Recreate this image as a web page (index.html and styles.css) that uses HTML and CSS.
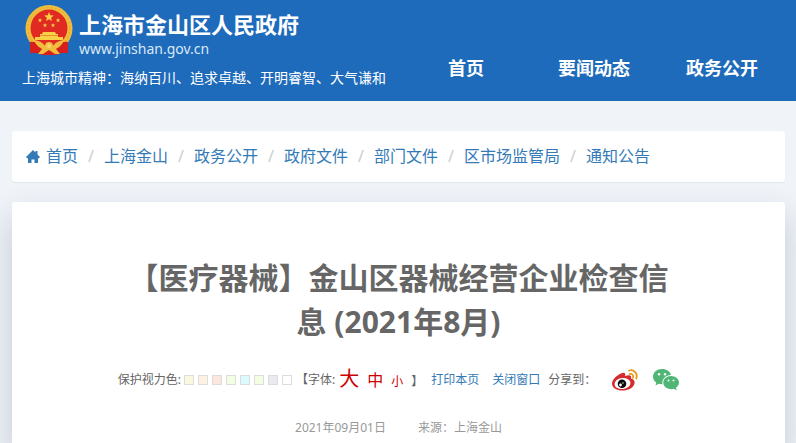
FILE: index.html
```html
<!DOCTYPE html>
<html lang="zh-CN">
<head>
    <meta charset="UTF-8">
    <meta name="viewport" content="width=device-width, initial-scale=1.0">
    <title>【医疗器械】金山区器械经营企业检查信息 (2021年8月)</title>
    <link rel="stylesheet" href="styles.css">
</head>
<body>
    <header class="header">
        <div class="brand">
            <a class="logo" href="#">
                <svg class="emblem" viewBox="0 0 48 52" aria-hidden="true">
                    <path d="M7 36 L5 48 L12 48 L18 50 H30 L36 48 L43 48 L41 36 Z" fill="#d81f1c"/>
                    <circle cx="24" cy="23.500" r="23.500" fill="#f0bd3c"/>
                    <circle cx="24" cy="23.500" r="21" fill="none" stroke="#e0a42f" stroke-width="1" stroke-dasharray="2 2"/>
                    <circle cx="24" cy="23" r="18.500" fill="#e12a22"/>
                    <path d="M24 7 L25.300 10.300 L28.800 10.500 L26.100 12.700 L27 16.100 L24 14.200 L21 16.100 L21.900 12.700 L19.200 10.500 L22.700 10.300 Z" fill="#f8cf45"/>
                    <g fill="#f8cf45">
                        <path id="star" d="M15 13 L15.600 14.500 L17.200 14.600 L16 15.600 L16.400 17.200 L15 16.300 L13.600 17.200 L14 15.600 L12.800 14.600 L14.400 14.500 Z"/>
                        <use href="#star" x="18"/>
                        <use href="#star" x="5" y="5"/>
                        <use href="#star" x="13" y="5"/>
                    </g>
                    <path d="M18 27 H30 L31 29 H33 V32 H38 V35 H10 V32 H15 V29 H17 Z" fill="#f8cf45"/>
                    <path d="M15 30.500 H33" stroke="#e8902b"/>
                    <path d="M5 37 Q12 36 16 42 H32 Q36 36 43 37 V48 L36 47 L31 50 H17 L12 47 L5 48 Z" fill="#d81f1c"/>
                    <path d="M9 35 Q17 36 20 41 L24 37 L28 41 Q31 36 39 35 Q37 41 31 44 L35 49 H30 L24 45 L18 49 H13 L17 44 Q11 41 9 35 Z" fill="#f0bd3c"/>
                    <circle cx="24" cy="41" r="4" fill="#f0bd3c"/>
                    <circle cx="24" cy="41" r="2" fill="#f8d96a"/>
                </svg>
                <span class="logo-text">
                    <strong class="site-name">上海市金山区人民政府</strong>
                    <span class="site-url">www.jinshan.gov.cn</span>
                </span>
            </a>
            <p class="motto">上海城市精神：海纳百川、追求卓越、开明睿智、大气谦和</p>
        </div>
        <nav class="nav">
            <a href="#">首页</a>
            <a href="#">要闻动态</a>
            <a href="#">政务公开</a>
        </nav>
    </header>

    <main class="container">
        <ol class="breadcrumb">
            <li>
                <a href="#">
                    <svg class="home" viewBox="0 0 14 14" aria-hidden="true"><path d="M7 0 L9.500 2.500 V1 H11.500 V4.500 L14 7 L13 8.200 H12 V13 H8.500 V9.500 H5.500 V13 H2 V8.200 H1 L0 7 Z" fill="#337ab7"/></svg>首页</a>
            </li>
            <li><a href="#">上海金山</a></li>
            <li><a href="#">政务公开</a></li>
            <li><a href="#">政府文件</a></li>
            <li><a href="#">部门文件</a></li>
            <li><a href="#">区市场监管局</a></li>
            <li><a href="#">通知公告</a></li>
        </ol>

        <article class="article">
            <h1>【医疗器械】金山区器械经营企业检查信息 (2021年8月)</h1>
            <div class="tools">
                <span>保护视力色:</span>
                <div class="swatches">
                    <button type="button" class="swatch yellow" aria-label="黄色"></button>
                    <button type="button" class="swatch orange" aria-label="橙色"></button>
                    <button type="button" class="swatch red" aria-label="红色"></button>
                    <button type="button" class="swatch green" aria-label="绿色"></button>
                    <button type="button" class="swatch blue" aria-label="蓝色"></button>
                    <button type="button" class="swatch green" aria-label="浅绿"></button>
                    <button type="button" class="swatch gray" aria-label="灰色"></button>
                    <button type="button" class="swatch white" aria-label="白色"></button>
                </div>
                <span>【字体:</span>
                <div class="sizes">
                    <a class="large" href="#">大</a>
                    <a class="medium" href="#">中</a>
                    <a class="small" href="#">小</a>
                    <span>】</span>
                </div>
                <div class="actions">
                    <a href="#">打印本页</a>
                    <a href="#">关闭窗口</a>
                </div>
                <span class="share-label">分享到：</span>
                <div class="share">
                    <a href="#" aria-label="微博">
                        <svg viewBox="0 0 26 22" aria-hidden="true">
                            <path d="M9 4.500 C12 3 14 4 13 7 C17 5.500 20 6 19 9.500 C22 10.500 23 12 22.500 14.500 C21.500 19 16 21.500 10.500 21.500 C5 21.500 0 19 0 14.500 C0 11 4.500 6.500 9 4.500 Z" fill="#d52b2e"/>
                            <ellipse cx="10.500" cy="14.500" rx="8" ry="5.500" fill="#fff" transform="rotate(-7 10.500 14.500)"/>
                            <circle cx="10" cy="14.800" r="4.300" fill="#0a0a0a"/>
                            <circle cx="8.500" cy="16" r="1.400" fill="#fff"/>
                            <circle cx="11" cy="14" r="0.700" fill="#fff"/>
                            <path d="M17 1.500 C22 0 26 4.500 24.300 9.500 M17.500 5 C20 4.300 21.800 6.500 21 8.800" fill="none" stroke="#e89b1c" stroke-width="1.800" stroke-linecap="round"/>
                        </svg>
                    </a>
                    <a href="#" aria-label="微信">
                        <svg viewBox="0 0 26 22" aria-hidden="true">
                            <path d="M9 0 C4 0 0 3.400 0 7.700 C0 10.200 1.300 12.200 3.300 13.600 L2.500 16.500 L5.700 14.800 C7 15.200 8 15.300 9.500 15.200 C8.500 10 13 6 18 6 C17.300 2.500 13.500 0 9 0 Z" fill="#50b674"/>
                            <path d="M18 7 C13.500 7 10.300 10 10.300 13.600 C10.300 17.500 13.800 20.200 18 20.200 C19 20.200 20 20 21 19.700 L23.700 21.500 L23 18.700 C24.800 17.400 26 15.700 26 13.600 C26 10 22.500 7 18 7 Z" fill="#50b674"/>
                            <g fill="#fff">
                                <circle cx="6" cy="5.200" r="1.200"/>
                                <circle cx="12" cy="5.200" r="1.200"/>
                                <circle cx="15.500" cy="11.500" r="1"/>
                                <circle cx="20.500" cy="11.500" r="1"/>
                            </g>
                        </svg>
                    </a>
                </div>
            </div>
            <p class="meta">
                <span>2021年09月01日</span>
                <span>来源：上海金山</span>
            </p>
        </article>
    </main>
</body>
</html>
```

FILE: styles.css
```css
* {
    box-sizing: border-box;
}
body {
    margin: 0;
    min-height: 100vh;
    display: flex;
    flex-direction: column;
    font-family: "Noto Sans", "Noto Sans CJK SC", sans-serif;
    font-size: 12px;
    color: #666;
    background-color: #f0f3f8;
}
a {
    color: #337ab7;
    text-decoration: none;
}

/* header */
.header {
    display: flex;
    justify-content: space-between;
    padding: 5px 10px 13px 22px;
    background-color: #1f6bbb;
    color: #fff;
}
.logo {
    display: flex;
    gap: 6px;
    padding-left: 3px;
    color: #fff;
}
.emblem {
    width: 48px;
    height: 52px;
}
.logo-text {
    display: flex;
    flex-direction: column;
    padding-top: 4px;
}
.site-name {
    font-size: 22px;
    line-height: 30px;
    font-weight: bold;
}
.site-url {
    font-size: 14px;
    line-height: 20px;
    color: #d9e8f7;
}
.motto {
    margin: 9px 0 0;
    font-size: 14px;
    line-height: 20px;
    white-space: nowrap;
}
.nav {
    display: grid;
    grid-template-columns: repeat(3, 128px);
    align-items: end;
    padding-bottom: 6px;
}
.nav a {
    color: #fff;
    font-size: 18px;
    line-height: 28px;
    font-weight: bold;
    text-align: center;
}

/* content */
.container {
    flex: 1;
    display: flex;
    flex-direction: column;
    gap: 20px;
    padding: 30px 11px 0 12px;
    overflow: hidden;
}
.breadcrumb {
    display: flex;
    flex-wrap: wrap;
    margin: 0;
    padding: 13px 14px;
    list-style: none;
    font-size: 16px;
    line-height: 25px;
    background-color: #fff;
    border-radius: 3px;
    box-shadow: 0 1px 1px rgba(0, 0, 0, 0.06);
}
.breadcrumb li {
    display: flex;
}
.breadcrumb li + li::before {
    content: "/";
    width: 26px;
    text-align: center;
    color: #ccc;
}
.breadcrumb a {
    display: flex;
    align-items: center;
}
.home {
    width: 14px;
    height: 14px;
    margin-right: 6px;
}
.article {
    flex: 1;
    padding: 54px 16px 8px;
    background-color: #fff;
    border-radius: 3px 3px 0 0;
    box-shadow: 0 16px 32px rgba(40, 70, 90, 0.24);
}
h1 {
    max-width: 560px;
    margin: 0 auto;
    font-size: 30px;
    line-height: 44px;
    text-align: center;
    color: #666;
}
.tools {
    display: flex;
    justify-content: center;
    align-items: center;
    height: 24px;
    margin-top: 24px;
    line-height: 20px;
    white-space: nowrap;
}
.swatches {
    display: flex;
    gap: 4px;
    margin: 0 4px 0 3px;
}
.swatch {
    width: 10px;
    height: 10px;
    padding: 0;
    border: 1px solid #ddd;
    cursor: pointer;
}
.yellow {
    background-color: #faf9de;
}
.orange {
    background-color: #fff2e2;
}
.red {
    background-color: #fde6e0;
}
.green {
    background-color: #f3ffe1;
}
.blue {
    background-color: #dafafe;
}
.gray {
    background-color: #e9ebee;
}
.white {
    background-color: #fff;
}
.sizes {
    display: flex;
    align-items: baseline;
    gap: 8px;
    margin: 0 8px 0 4px;
}
.sizes a {
    color: #c00;
}
.sizes .large {
    font-size: 20px;
}
.sizes .medium {
    font-size: 16px;
}
.sizes .small {
    font-size: 12px;
}
.actions {
    display: flex;
    gap: 13px;
}
.share-label {
    margin: 0 16px 0 8px;
}
.share {
    display: flex;
    gap: 15px;
}
.share svg {
    display: block;
    width: 26px;
    height: 22px;
}
.meta {
    display: flex;
    justify-content: center;
    gap: 32px;
    margin: 26px 0 0;
    line-height: 20px;
    color: #999;
}
```
